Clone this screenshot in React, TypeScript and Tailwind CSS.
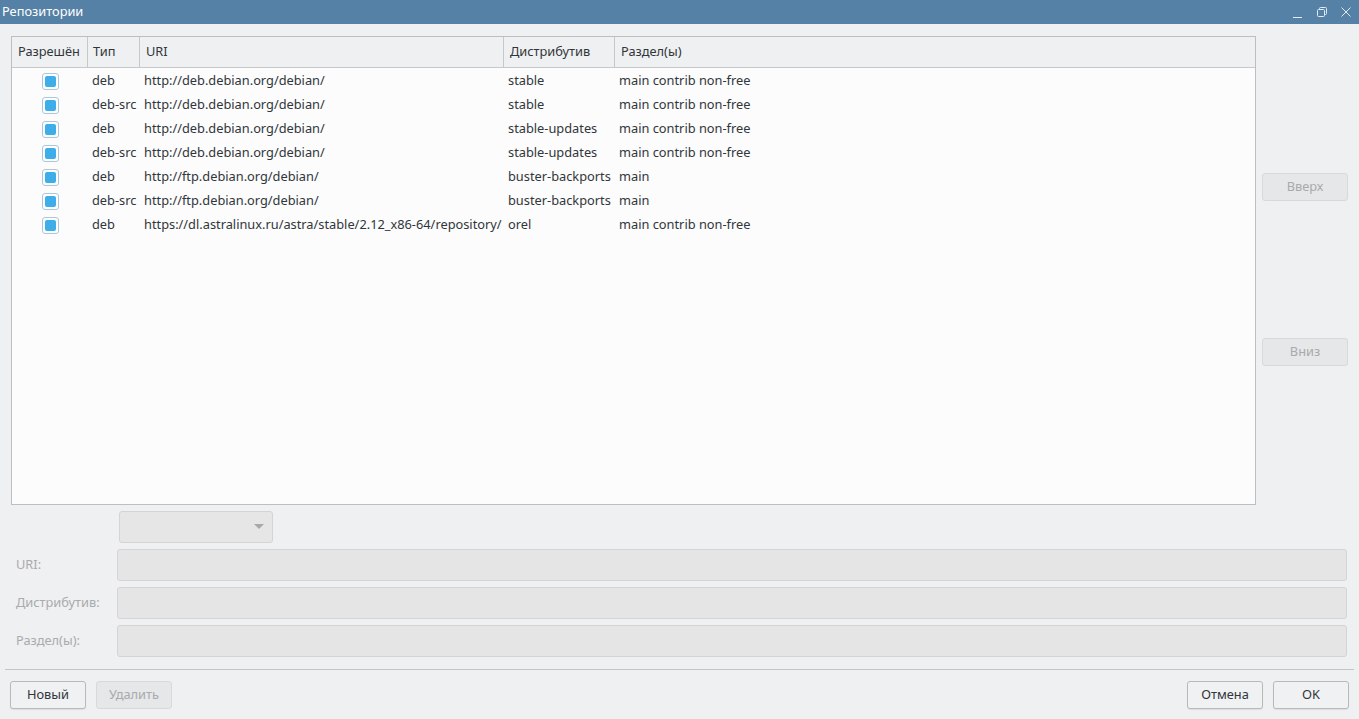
import React from "react";

const rows = [
  { type: "deb", uri: "http://deb.debian.org/debian/", dist: "stable", sec: "main contrib non-free" },
  { type: "deb-src", uri: "http://deb.debian.org/debian/", dist: "stable", sec: "main contrib non-free" },
  { type: "deb", uri: "http://deb.debian.org/debian/", dist: "stable-updates", sec: "main contrib non-free" },
  { type: "deb-src", uri: "http://deb.debian.org/debian/", dist: "stable-updates", sec: "main contrib non-free" },
  { type: "deb", uri: "http://ftp.debian.org/debian/", dist: "buster-backports", sec: "main" },
  { type: "deb-src", uri: "http://ftp.debian.org/debian/", dist: "buster-backports", sec: "main" },
  { type: "deb", uri: "https://dl.astralinux.ru/astra/stable/2.12_x86-64/repository/", dist: "orel", sec: "main contrib non-free" },
];

function Check() {
  return (
    <span className="flex h-[17px] w-[17px] items-center justify-center rounded-[3px] border border-[#a9c8dc] bg-white">
      <span className="h-[11px] w-[11px] rounded-[2px] bg-[#3daee9]" />
    </span>
  );
}

function Btn({ children, disabled, className = "" }: { children: React.ReactNode; disabled?: boolean; className?: string }) {
  return (
    <button
      className={
        "flex h-[28px] w-[76px] shrink-0 items-center justify-center rounded-[3px] border text-[12.8px] " +
        (disabled
          ? "border-[#d8d9da] bg-[#e6e7e8] text-[#a8aaac]"
          : "border-[#b7b9bb] bg-[#f0f1f2] text-[#31363b] shadow-[0_1px_1px_rgba(0,0,0,0.08)]") +
        " " +
        className
      }
    >
      {children}
    </button>
  );
}

function Field({ label }: { label: string }) {
  return (
    <div className="flex h-[32px] shrink-0 items-center">
      <div className="w-[112px] pl-[11px] text-[12.8px] text-[#a9abad]">{label}</div>
      <div className="h-full flex-1 rounded-[3px] border border-[#d3d4d5] bg-[#e5e5e5]" />
    </div>
  );
}

export default function App() {
  return (
    <div className="flex h-[719px] w-[1359px] flex-col overflow-hidden bg-[#eff0f1] text-[#31363b]" style={{ fontFamily: '"Noto Sans", sans-serif' }}>
      <div className="flex h-[24px] shrink-0 items-center justify-between bg-[#5581a6] pl-[2px] pr-[7px] text-[12.8px] text-white">
        <span>Репозитории</span>
        <div className="flex items-center gap-[12px] text-[#e3ebf2]">
          <svg width="12" height="12" viewBox="0 0 12 12"><path d="M1 11.5h9" stroke="currentColor" strokeWidth="1" /></svg>
          <svg width="12" height="12" viewBox="0 0 12 12" fill="none" stroke="currentColor">
            <rect x="1.5" y="3.5" width="7" height="7" rx="1" />
            <path d="M3.5 3.5V2.5a1 1 0 0 1 1-1h5a1 1 0 0 1 1 1v5a1 1 0 0 1-1 1h-1" />
          </svg>
          <svg width="12" height="12" viewBox="0 0 12 12" stroke="currentColor"><path d="M1.5 1.5l9 9M10.5 1.5l-9 9" /></svg>
        </div>
      </div>

      <div className="flex flex-1 flex-col px-[5px]">
        <div className="flex h-[481px] shrink-0 pl-[6px] pt-[12px]">
          <div className="flex-1 border border-[#bcbebf] bg-[#fcfcfc]">
            <div className="flex h-[31px] items-center border-b border-[#c7c8c9] bg-[#eff0f1] text-[12.8px]">
              <div className="flex h-full w-[76px] items-center border-r border-[#c7c8c9] pl-[6px]">Разрешён</div>
              <div className="flex h-full w-[52px] items-center border-r border-[#c7c8c9] pl-[5px]">Тип</div>
              <div className="flex h-full w-[364px] items-center border-r border-[#c7c8c9] pl-[6px]">URI</div>
              <div className="flex h-full w-[111px] items-center border-r border-[#c7c8c9] pl-[6px]">Дистрибутив</div>
              <div className="flex h-full flex-1 items-center pl-[6px]">Раздел(ы)</div>
            </div>
            <div className="pt-[1px]">
              {rows.map((r, i) => (
                <div key={i} className="flex h-[24px] items-center text-[12.8px]">
                  <div className="flex w-[77px] justify-center pr-[1px]"><Check /></div>
                  <div className="w-[52px] pl-[3px]">{r.type}</div>
                  <div className="w-[364px] whitespace-nowrap pl-[3px]">{r.uri}</div>
                  <div className="w-[111px] whitespace-nowrap pl-[3px]">{r.dist}</div>
                  <div className="flex-1 pl-[3px]">{r.sec}</div>
                </div>
              ))}
            </div>
          </div>
          <div className="flex w-[98px] flex-col items-end pr-[6px]">
            <Btn disabled className="mt-[137px] w-[86px]">Вверх</Btn>
            <Btn disabled className="mt-[137px] w-[86px]">Вниз</Btn>
          </div>
        </div>

        <div className="flex shrink-0 flex-col gap-[6px] pr-[7px] pt-[6px]">
          <div className="flex h-[32px] pl-[114px]">
            <div className="flex w-[154px] items-center justify-end rounded-[3px] border border-[#d3d4d5] bg-[#e6e6e6] pr-[8px]">
              <svg width="10" height="6" viewBox="0 0 10 6"><path d="M0 0h10L5 5z" fill="#a8a9aa" /></svg>
            </div>
          </div>
          <Field label="URI:" />
          <Field label="Дистрибутив:" />
          <Field label="Раздел(ы):" />
        </div>

        <div className="mt-[12px] shrink-0 border-t border-[#c3c5c6]" />

        <div className="flex shrink-0 items-center justify-between pl-[5px] pr-[5px] pt-[11px]">
          <div className="flex gap-[10px]">
            <Btn className="w-[75px]">Новый</Btn>
            <Btn disabled>Удалить</Btn>
          </div>
          <div className="flex gap-[10px]">
            <Btn className="w-[75px]">Отмена</Btn>
            <Btn>OK</Btn>
          </div>
        </div>
      </div>
    </div>
  );
}
